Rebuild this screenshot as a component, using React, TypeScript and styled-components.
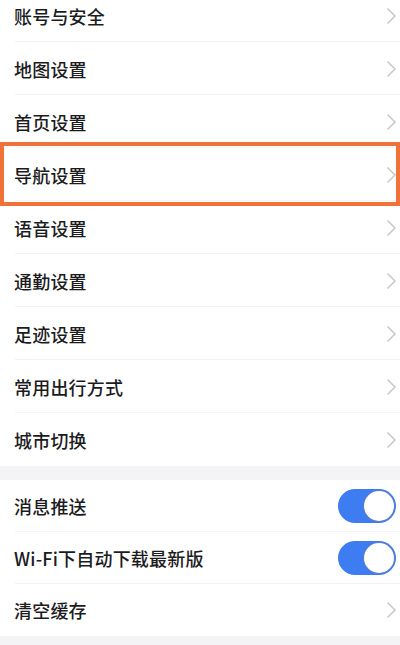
import styled, { createGlobalStyle } from "styled-components";

const GlobalStyle = createGlobalStyle`
	html, body {
		margin: 0;
		padding: 0;
		background: #f4f4f6;
		font-family: "Noto Sans CJK SC", "Noto Sans", sans-serif;
		overflow: hidden;
	}
`;

const Page = styled.div`
	width: 400px;
	height: 645px;
	overflow: hidden;
	background: #f4f4f6;
	display: flex;
	flex-direction: column;
	row-gap: 14px;
`;

const Group = styled.div<{ $offset?: number }>`
	background: #fff;
	display: flex;
	flex-direction: column;
	margin-top: ${({ $offset }) => $offset ?? 0}px;
`;

const Row = styled.div<{ $height: number; $last?: boolean }>`
	position: relative;
	height: ${({ $height }) => $height}px;
	display: flex;
	align-items: center;
	justify-content: space-between;
	padding: 0 3px 0 14px;

	&::after {
		content: "";
		display: ${({ $last }) => ($last ? "none" : "block")};
		position: absolute;
		left: 15px;
		right: 0;
		bottom: 0;
		height: 1px;
		background: #f3f3f5;
	}
`;

const Label = styled.span`
	font-size: 18px;
	font-weight: 500;
	color: #1c1c1e;
	letter-spacing: 0.2px;
	line-height: 1;
`;

const Highlight = styled.div`
	position: absolute;
	left: 0;
	right: 0;
	top: -6px;
	bottom: -5px;
	border: 4px solid #f07239;
	pointer-events: none;
	z-index: 1;
`;

const Toggle = styled.div`
	width: 58px;
	height: 34px;
	border-radius: 17px;
	background: #3d7cf1;
	display: flex;
	align-items: center;
	justify-content: flex-end;
	padding: 2px;
	box-sizing: border-box;
	margin-right: 1px;
`;

const Knob = styled.div`
	width: 30px;
	height: 30px;
	border-radius: 50%;
	background: #fff;
	box-shadow: 0 0 0 1px #5b7fd0;
`;

const Chevron = () => (
	<svg width="12" height="18" viewBox="0 0 12 18">
		<path d="M 2.5 1.5 L 10 9 L 2.5 16.5" fill="none" stroke="#c8c8cc" strokeWidth="1.5" />
	</svg>
);

const mainItems = [
	"账号与安全",
	"地图设置",
	"首页设置",
	"导航设置",
	"语音设置",
	"通勤设置",
	"足迹设置",
	"常用出行方式",
	"城市切换",
];

const App = () => {
	return (
		<>
			<GlobalStyle />
			<Page>
				<Group $offset={-11}>
					{mainItems.map((label, i) => (
						<Row key={label} $height={53} $last={i === mainItems.length - 1}>
							<Label>{label}</Label>
							<Chevron />
							{label === "导航设置" && <Highlight />}
						</Row>
					))}
				</Group>
				<Group>
					<Row $height={52}>
						<Label>消息推送</Label>
						<Toggle>
							<Knob />
						</Toggle>
					</Row>
					<Row $height={52}>
						<Label>Wi-Fi下自动下载最新版</Label>
						<Toggle>
							<Knob />
						</Toggle>
					</Row>
					<Row $height={52} $last>
						<Label>清空缓存</Label>
						<Chevron />
					</Row>
				</Group>
			</Page>
		</>
	);
};

export default App;
